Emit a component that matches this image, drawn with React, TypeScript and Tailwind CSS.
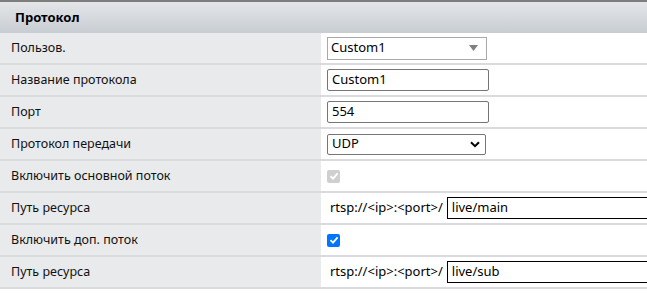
const font = { fontFamily: '"Noto Sans", "Open Sans", sans-serif' };

function Check({ disabled }: { disabled?: boolean }) {
  return (
    <span
      className={`flex h-[13px] w-[13px] items-center justify-center rounded-[2px] ${
        disabled ? "bg-[#cfcfcf]" : "bg-[#0075ff]"
      }`}
    >
      <svg width="10" height="10" viewBox="0 0 10 10">
        <path d="M1.5 5.2 L4 7.6 L8.6 2.4" fill="none" stroke="#fff" strokeWidth="1.8" />
      </svg>
    </span>
  );
}

function Row({ label, children }: { label: string; children: React.ReactNode }) {
  return (
    <div className="flex h-[32px] border-b-2 border-[#d9dbde]">
      <div className="flex w-[321px] items-center bg-[#e9eaec] pl-[11px] text-[12.5px] text-[#111]">{label}</div>
      <div className="flex flex-1 items-center overflow-hidden bg-white pl-[6px] text-[13px] text-black">{children}</div>
    </div>
  );
}

export default function App() {
  return (
    <div className="h-[294px] w-[647px] overflow-hidden bg-white" style={font}>
      <div className="flex h-[33px] items-center border-t-2 border-[#7d7d7d] bg-gradient-to-b from-[#e4e6e8] to-[#c8cdd3] pl-[15px] text-[13px] font-bold text-black">
        Протокол
      </div>
      <Row label="Пользов.">
        <div className="flex h-[23px] w-[160px] items-center justify-between border border-[#a9a9a9] pl-[3px] pr-[8px]">
          <span>Custom1</span>
          <svg width="9" height="6" viewBox="0 0 9 6">
            <path d="M0 0 H9 L4.5 6 Z" fill="#808080" />
          </svg>
        </div>
      </Row>
      <Row label="Название протокола">
        <div className="flex h-[22px] w-[162px] items-center rounded-[2px] border border-[#767676] pl-[4px]">Custom1</div>
      </Row>
      <Row label="Порт">
        <div className="flex h-[22px] w-[162px] items-center rounded-[2px] border border-[#767676] pl-[4px]">554</div>
      </Row>
      <Row label="Протокол передачи">
        <div className="flex h-[21px] w-[159px] items-center justify-between rounded-[2px] border border-[#767676] pl-[4px] pr-[5px]">
          <span>UDP</span>
          <svg width="10" height="7" viewBox="0 0 10 7">
            <path d="M1 1.2 L5 5.2 L9 1.2" fill="none" stroke="#000" strokeWidth="2" />
          </svg>
        </div>
      </Row>
      <Row label="Включить основной поток">
        <Check disabled />
      </Row>
      <Row label="Путь ресурса">
        <span className="ml-[3px] mr-[4px] whitespace-nowrap">rtsp://&lt;ip&gt;:&lt;port&gt;/</span>
        <div className="flex h-[22px] w-[240px] shrink-0 items-center border border-black pl-[4px]">live/main</div>
      </Row>
      <Row label="Включить доп. поток">
        <Check />
      </Row>
      <Row label="Путь ресурса">
        <span className="ml-[3px] mr-[4px] whitespace-nowrap">rtsp://&lt;ip&gt;:&lt;port&gt;/</span>
        <div className="flex h-[22px] w-[240px] shrink-0 items-center border border-black pl-[4px]">live/sub</div>
      </Row>
    </div>
  );
}
